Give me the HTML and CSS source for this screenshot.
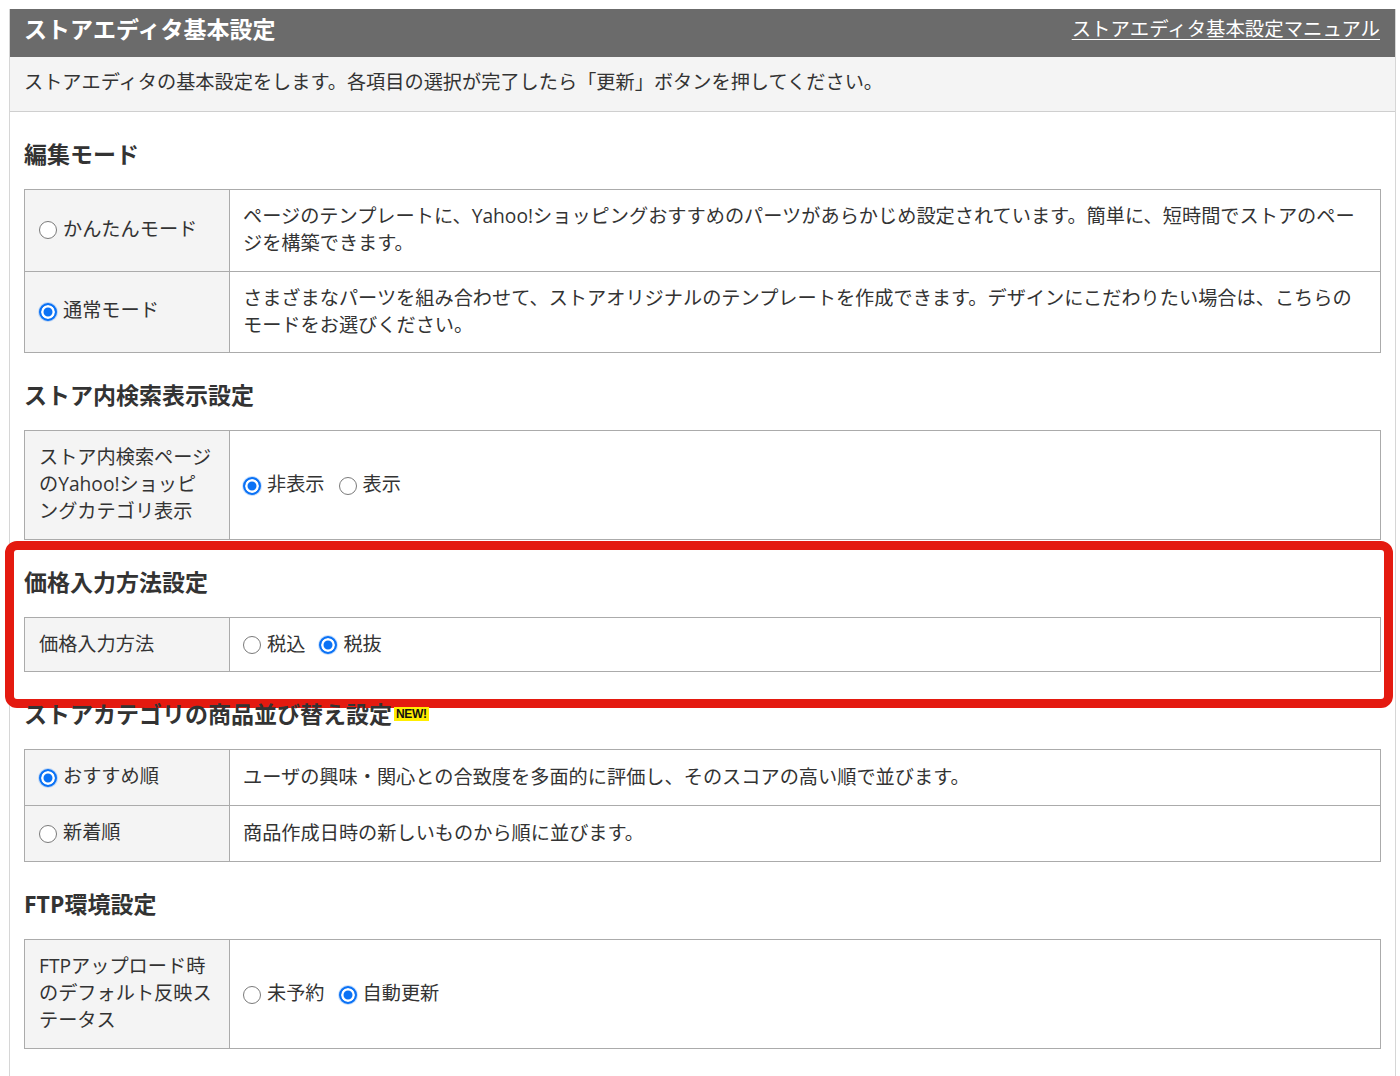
FILE: index.html
```html
<!DOCTYPE html>
<html lang="ja">
<head>
<meta charset="utf-8">
<title>ストアエディタ基本設定</title>
<link rel="stylesheet" href="styles.css">
</head>
<body>
<div class="page">
  <div class="panel">
    <header class="panel-head">
      <h1 class="panel-title">ストアエディタ基本設定</h1>
      <a class="manual-link" href="#">ストアエディタ基本設定マニュアル</a>
    </header>
    <p class="panel-desc">ストアエディタの基本設定をします。各項目の選択が完了したら「更新」ボタンを押してください。</p>
    <div class="panel-body">

      <section class="setting">
        <h2 class="setting-title">編集モード</h2>
        <table class="setting-table">
          <tr>
            <th><label class="radio"><input type="radio" name="mode"><span>かんたんモード</span></label></th>
            <td>ページのテンプレートに、Yahoo!ショッピングおすすめのパーツがあらかじめ設定されています。簡単に、短時間でストアのページを構築できます。</td>
          </tr>
          <tr>
            <th><label class="radio"><input type="radio" name="mode" checked><span>通常モード</span></label></th>
            <td>さまざまなパーツを組み合わせて、ストアオリジナルのテンプレートを作成できます。デザインにこだわりたい場合は、こちらのモードをお選びください。</td>
          </tr>
        </table>
      </section>

      <section class="setting">
        <h2 class="setting-title">ストア内検索表示設定</h2>
        <table class="setting-table">
          <tr>
            <th>ストア内検索ページのYahoo!ショッピングカテゴリ表示</th>
            <td>
              <div class="radio-group">
                <label class="radio"><input type="radio" name="cat" checked><span>非表示</span></label>
                <label class="radio"><input type="radio" name="cat"><span>表示</span></label>
              </div>
            </td>
          </tr>
        </table>
      </section>

      <section class="setting setting-highlighted">
        <h2 class="setting-title">価格入力方法設定</h2>
        <table class="setting-table">
          <tr>
            <th>価格入力方法</th>
            <td>
              <div class="radio-group">
                <label class="radio"><input type="radio" name="price"><span>税込</span></label>
                <label class="radio"><input type="radio" name="price" checked><span>税抜</span></label>
              </div>
            </td>
          </tr>
        </table>
        <div class="highlight-frame"></div>
      </section>

      <section class="setting">
        <h2 class="setting-title">ストアカテゴリの商品並び替え設定<span class="new-badge">NEW!</span></h2>
        <table class="setting-table">
          <tr>
            <th><label class="radio"><input type="radio" name="sort" checked><span>おすすめ順</span></label></th>
            <td>ユーザの興味・関心との合致度を多面的に評価し、そのスコアの高い順で並びます。</td>
          </tr>
          <tr>
            <th><label class="radio"><input type="radio" name="sort"><span>新着順</span></label></th>
            <td>商品作成日時の新しいものから順に並びます。</td>
          </tr>
        </table>
      </section>

      <section class="setting">
        <h2 class="setting-title">FTP環境設定</h2>
        <table class="setting-table">
          <tr>
            <th>FTPアップロード時のデフォルト反映ステータス</th>
            <td>
              <div class="radio-group">
                <label class="radio"><input type="radio" name="ftp"><span>未予約</span></label>
                <label class="radio"><input type="radio" name="ftp" checked><span>自動更新</span></label>
              </div>
            </td>
          </tr>
        </table>
      </section>

    </div>
  </div>
</div>
</body>
</html>
```

FILE: styles.css
```css
* {
  box-sizing: border-box;
}

html, body {
  margin: 0;
  padding: 0;
  background: #ffffff;
}

body {
  font-family: "Open Sans", "Noto Sans CJK JP", sans-serif;
  color: #333333;
  font-size: 19.2px;
}

.page {
  padding: 9px 4px 0 9px;
}

.panel {
  width: 1387px;
  min-height: 1067px;
  border-left: 1px solid #d6d6d6;
  border-right: 1px solid #d6d6d6;
}

.panel-head {
  display: flex;
  align-items: center;
  justify-content: space-between;
  height: 48px;
  padding: 0 15px 8px 14px;
  background: #6b6b6b;
}

.panel-title {
  margin: 0;
  font-size: 23px;
  font-weight: 700;
  line-height: 32px;
  color: #ffffff;
}

.manual-link {
  color: #ffffff;
  font-size: 19.4px;
  line-height: 28px;
  text-decoration: underline;
  text-underline-offset: 3px;
  text-decoration-thickness: 1px;
}

.panel-desc {
  margin: 0;
  padding: 11px 14px 15px;
  background: #f4f4f4;
  border-bottom: 1px solid #cfcfcf;
  line-height: 28px;
}

.panel-body {
  padding: 0 14px 30px 14px;
}

.setting {
  position: relative;
}

.setting-title {
  margin: 26px 0 19px;
  font-size: 23px;
  font-weight: 700;
  line-height: 32px;
  color: #333333;
}

.setting-table {
  width: 1357px;
  border-collapse: collapse;
  table-layout: fixed;
}

.setting-table th,
.setting-table td {
  border: 1px solid #ababab;
  padding: 12px 14px 14.5px 13px;
  line-height: 27px;
  text-align: left;
  vertical-align: middle;
  font-weight: 400;
}

.setting-table th {
  width: 205px;
  padding: 12px 16px 14.5px 14px;
  background: #f4f4f4;
}

.setting-table td {
  background: #ffffff;
}

.radio-group {
  display: flex;
  align-items: center;
  gap: 14px;
}

.radio {
  display: inline-flex;
  align-items: center;
  white-space: nowrap;
}

.radio input {
  appearance: none;
  -webkit-appearance: none;
  flex: 0 0 18px;
  width: 18px;
  height: 18px;
  margin: 0 6px 0 0;
  border: 1.5px solid #7a7a7a;
  border-radius: 50%;
  background: #ffffff;
  position: relative;
  top: 2px;
}

.radio input:checked {
  border: 2px solid #0b72f5;
  background: #0b72f5;
  box-shadow: inset 0 0 0 2.5px #ffffff, 0 0 0 1px rgba(11, 114, 245, 0.22);
}

.new-badge {
  display: inline-block;
  margin-left: 2px;
  padding: 0 2px;
  background: #ffee00;
  color: #111111;
  font-family: "Liberation Sans", sans-serif;
  font-size: 12px;
  font-weight: 700;
  line-height: 14px;
  vertical-align: 5px;
  letter-spacing: -0.3px;
}

.highlight-frame {
  position: absolute;
  top: -25px;
  left: -19px;
  right: -12px;
  bottom: -36px;
  border: 9px solid #e41a10;
  border-radius: 12px;
  pointer-events: none;
}
```
